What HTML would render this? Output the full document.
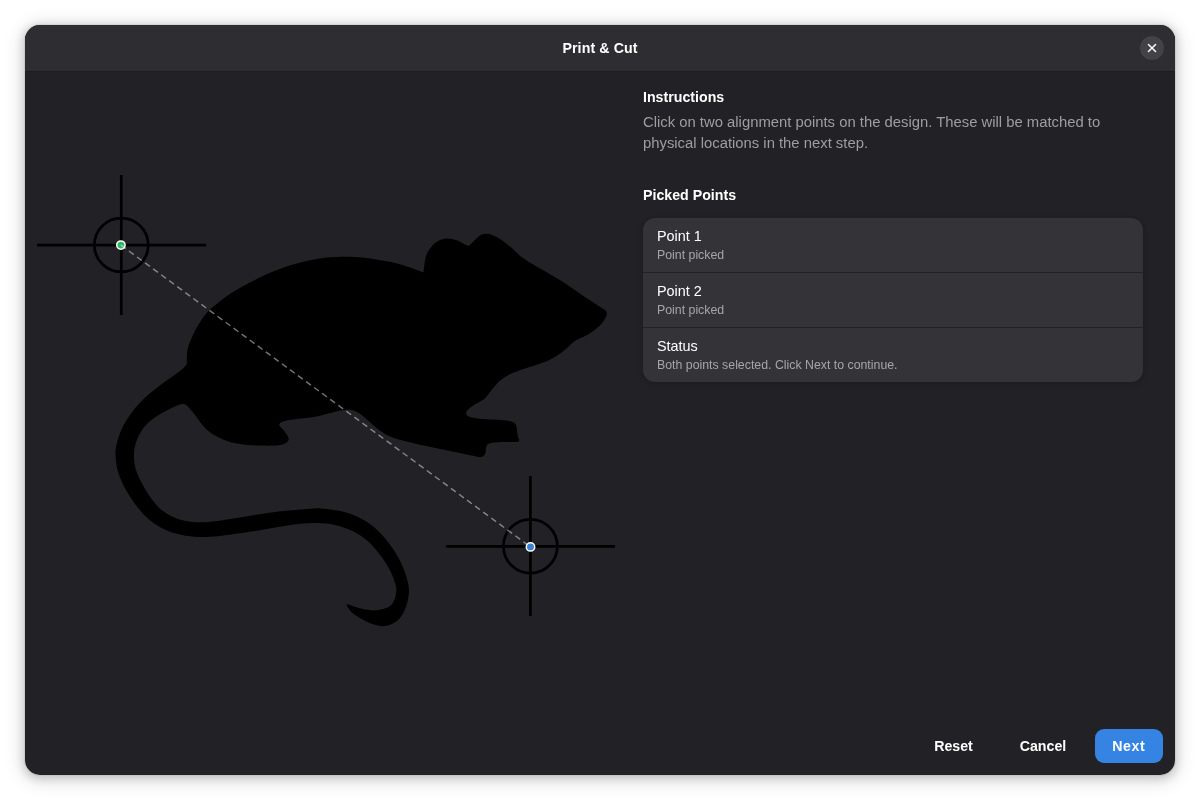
<!DOCTYPE html>
<html lang="en">
<head>
<meta charset="utf-8">
<title>Print &amp; Cut</title>
<style>
*{box-sizing:border-box;margin:0;padding:0}
html,body{width:1200px;height:800px;overflow:hidden;background:#fff}
body{font-family:"Liberation Sans","DejaVu Sans",sans-serif;color:#fff;position:relative;-webkit-font-smoothing:antialiased}
.win{will-change:transform;position:absolute;left:25px;top:25px;width:1150px;height:750px;border-radius:15px;background:#222226;overflow:hidden}
.shadow{position:absolute;left:25px;top:25px;width:1150px;height:750px;border-radius:15px;
 box-shadow:0 2px 8px 2px rgba(0,0,0,.16),0 3px 18px 5px rgba(0,0,0,.10),0 0 0 1px rgba(0,0,0,.05)}
.hdr{position:absolute;left:0;top:0;width:1150px;height:46px;background:#2e2e32;box-shadow:0 1px 0 #1d1d20}
.title{position:absolute;left:0;width:1150px;top:14px;text-align:center;font-weight:700;font-size:14.2px;line-height:18px;letter-spacing:.1px}
.close{position:absolute;left:1115px;top:11px;width:24px;height:24px;border-radius:12px;background:#434347}
.close svg{position:absolute;left:0;top:0}
.art{position:absolute;left:0;top:0;width:1200px;height:800px}
.h{position:absolute;left:618px;font-weight:700;font-size:14.2px;line-height:18px;white-space:nowrap}
.p{position:absolute;left:618px;font-size:14.83px;line-height:21px;color:#9e9ea0;white-space:nowrap}
.list{position:absolute;left:618px;top:193px;width:500px;height:164px;border-radius:12px;background:#343338;overflow:hidden;box-shadow:0 0 0 1px rgba(0,0,0,.03),0 1px 3px 1px rgba(0,0,0,.07),0 2px 6px 2px rgba(0,0,0,.03)}
.row{position:absolute;left:0;width:500px;height:54px}
.row+.row{border-top:1px solid #222225}
.rt{position:absolute;left:14px;top:9px;font-size:14.4px;line-height:18px;white-space:nowrap}
.rs{position:absolute;left:14px;top:30px;font-size:12.33px;line-height:15px;color:#a6a6a8;white-space:nowrap}
.btn{position:absolute;top:704px;height:34px;border-radius:9px;font-weight:700;font-size:14.2px;line-height:34px;text-align:center;white-space:nowrap}
.next{background:#3584e4}
</style>
</head>
<body>
<div class="shadow"></div>
<div class="win">
  <div class="hdr">
    <div class="title">Print &amp; Cut</div>
    <div class="close"><svg width="24" height="24" viewBox="0 0 24 24"><g stroke="#fff" stroke-width="1.45" stroke-linecap="round"><line x1="8.45" y1="8.45" x2="15.55" y2="15.55"/><line x1="15.55" y1="8.45" x2="8.45" y2="15.55"/></g></svg></div>
  </div>

  <div class="h" style="top:63px">Instructions</div>
  <div class="p" style="top:87px">Click on two alignment points on the design. These will be matched to<br>physical locations in the next step.</div>
  <div class="h" style="top:161px">Picked Points</div>

  <div class="list">
    <div class="row" style="top:0"><div class="rt">Point 1</div><div class="rs">Point picked</div></div>
    <div class="row" style="top:54px;height:56px"><div class="rt" style="top:9px">Point 2</div><div class="rs">Point picked</div></div>
    <div class="row" style="top:109px;height:55px"><div class="rt" style="top:9px">Status</div><div class="rs">Both points selected. Click Next to continue.</div></div>
  </div>

  <div class="btn" style="left:897.5px;width:62px">Reset</div>
  <div class="btn" style="left:983px;width:70px">Cancel</div>
  <div class="btn next" style="left:1070px;width:68px;letter-spacing:.5px;text-indent:-.5px">Next</div>
</div>

<svg class="art" width="1200" height="800" viewBox="0 0 1200 800">
  <path fill="#000" d="M423.5 272.4C423.8 270.1 424.6 262.1 425.4 258.6C426.2 255.1 426.9 253.5 428.2 251.2C429.5 248.9 431.2 246.8 433.0 245.0C434.8 243.2 436.7 241.7 439.0 240.6C441.3 239.5 443.9 238.5 447.0 238.5C450.1 238.5 454.5 239.4 457.5 240.4C460.5 241.4 463.3 243.7 465.0 244.6C466.7 245.5 466.7 245.6 467.6 245.6C468.5 245.6 468.5 246.0 470.4 244.4C472.3 242.8 476.3 238.0 479.0 236.2C481.7 234.4 483.3 233.6 486.4 233.8C489.5 234.0 493.4 235.3 497.4 237.5C501.4 239.7 506.3 243.5 510.3 246.7C514.3 249.9 517.6 253.9 521.3 256.8C525.0 259.7 528.1 261.5 532.4 264.1C536.7 266.7 541.5 269.2 547.0 272.4C552.5 275.6 559.3 279.4 565.4 283.4C571.5 287.4 578.1 292.5 583.8 296.3C589.5 300.1 595.9 304.1 599.4 306.4C602.9 308.7 603.8 308.6 605.0 310.0C606.2 311.4 607.3 312.6 606.8 314.7C606.3 316.8 604.5 320.1 602.2 322.9C599.9 325.6 596.4 328.8 593.0 331.2C589.6 333.6 585.1 335.9 582.0 337.6C578.9 339.3 577.4 339.3 574.6 341.3C571.8 343.3 568.8 346.7 565.4 349.4C562.0 352.1 558.1 355.1 554.0 357.5C549.9 359.9 545.3 361.7 540.5 363.5C535.7 365.3 530.0 366.8 525.0 368.5C520.0 370.2 514.4 372.0 510.3 374.0C506.2 376.0 503.3 377.8 500.2 380.4C497.1 383.0 494.5 386.5 491.9 389.6C489.3 392.7 487.7 396.2 484.6 398.8C481.5 401.4 476.4 403.3 473.5 405.3C470.6 407.3 468.3 409.3 467.1 410.8C465.9 412.3 465.9 413.3 466.5 414.4C467.1 415.5 468.1 416.4 470.8 417.2C473.5 418.0 477.6 418.5 482.7 419.0C487.8 419.5 496.2 419.5 501.1 420.0C506.0 420.5 509.6 420.9 512.1 421.8C514.6 422.7 515.3 423.5 516.2 425.5C517.1 427.5 516.9 431.6 517.3 433.8C517.7 436.0 518.3 437.5 518.6 438.6C518.9 439.7 519.5 440.1 519.3 440.6C519.1 441.2 518.5 441.6 517.6 441.9C516.7 442.1 516.5 442.1 514.0 442.1C511.6 442.1 506.9 441.8 502.9 442.0C498.9 442.2 492.8 442.5 490.0 443.3C487.2 444.1 487.1 445.0 486.4 446.6C485.6 448.2 486.1 451.4 485.5 453.0C484.9 454.6 484.1 455.8 482.7 456.4C481.3 457.0 481.8 457.4 477.2 456.7C472.6 456.0 463.4 453.8 455.1 452.1C446.8 450.4 436.2 448.2 427.6 446.3C419.0 444.4 409.9 442.4 403.4 440.7C396.9 439.0 393.0 438.1 388.7 436.1C384.4 434.1 381.6 431.8 377.6 428.7C373.6 425.6 368.5 420.6 364.8 417.7C361.1 414.8 358.7 412.6 355.6 411.3C352.5 410.0 350.1 409.7 346.4 409.8C342.7 409.9 338.7 411.0 333.5 412.2C328.3 413.4 321.2 415.7 315.1 416.8C309.0 417.9 302.2 418.2 296.8 419.0C291.4 419.8 285.9 420.4 283.0 421.4C280.1 422.4 279.2 423.5 279.3 425.0C279.4 426.5 282.4 428.5 283.9 430.6C285.4 432.8 288.0 435.9 288.5 437.9C289.0 439.9 288.4 441.3 286.7 442.5C285.0 443.7 282.8 444.8 278.4 445.3C273.9 445.8 266.4 445.7 260.0 445.5C253.6 445.3 245.5 444.8 239.7 443.9C233.9 443.0 229.6 441.9 225.0 440.2C220.4 438.5 215.8 436.2 212.1 433.8C208.4 431.4 205.9 428.9 202.9 425.5C199.9 422.1 196.6 416.9 193.8 413.5C191.1 410.1 188.6 406.8 186.4 405.3C184.2 403.8 183.7 403.7 180.9 404.3C178.2 404.9 174.2 406.8 169.9 408.9C165.6 411.0 159.6 414.0 155.1 417.2C150.6 420.4 146.4 423.9 143.2 428.2C140.0 432.5 137.3 438.3 135.8 442.9C134.3 447.5 134.0 451.6 134.0 456.0C134.0 460.4 134.4 464.7 135.8 469.4C137.2 474.1 139.7 479.2 142.3 484.1C144.9 489.0 148.1 494.4 151.5 498.8C154.9 503.2 158.2 507.5 162.5 510.8C166.8 514.1 171.7 516.8 177.2 518.7C182.7 520.6 188.9 521.8 195.6 522.2C202.3 522.6 210.2 521.7 217.6 520.9C224.9 520.1 232.3 518.8 239.7 517.6C247.1 516.4 254.5 515.0 261.8 513.9C269.2 512.8 277.1 511.8 283.8 511.1C290.5 510.4 296.1 509.9 302.2 509.5C308.3 509.1 314.0 508.1 320.4 508.4C326.8 508.7 334.3 509.6 340.7 511.1C347.1 512.6 353.2 514.7 359.0 517.6C364.8 520.5 370.4 524.0 375.6 528.6C380.8 533.2 386.0 539.3 390.3 545.1C394.6 550.9 398.4 557.4 401.3 563.5C404.2 569.6 406.6 576.7 407.8 581.9C409.0 587.1 409.2 590.2 408.7 594.8C408.2 599.4 406.9 605.2 405.0 609.5C403.1 613.8 400.7 617.8 397.6 620.5C394.5 623.2 390.3 624.9 386.6 625.7C382.9 626.5 379.6 626.1 375.6 625.1C371.6 624.1 366.7 621.8 362.7 619.6C358.7 617.5 354.4 614.7 351.7 612.2C348.9 609.7 347.1 605.8 346.2 604.5C346.8 604.6 347.4 604.2 349.9 604.9C352.3 605.6 356.9 607.7 360.9 608.6C364.9 609.5 369.8 610.4 373.8 610.4C377.8 610.4 381.8 609.7 384.8 608.6C387.9 607.5 390.3 606.3 392.1 604.0C393.9 601.7 395.2 597.9 395.8 594.8C396.4 591.7 396.7 589.6 395.8 585.6C394.9 581.6 392.8 575.8 390.3 570.9C387.9 566.0 384.8 561.1 381.1 556.2C377.4 551.3 372.8 545.6 368.2 541.5C363.6 537.4 359.0 534.2 353.5 531.4C348.0 528.6 341.2 526.3 335.1 524.9C329.0 523.5 322.9 523.2 316.8 523.1C310.7 523.0 304.5 523.4 298.4 524.0C292.3 524.6 285.5 525.9 280.0 526.8C274.5 527.7 271.5 528.2 265.4 529.2C259.3 530.2 251.1 531.7 243.4 532.8C235.8 533.9 226.8 535.3 219.5 536.0C212.2 536.7 205.7 537.2 199.3 537.0C192.9 536.8 186.7 536.0 180.9 534.7C175.1 533.4 169.5 531.7 164.3 529.2C159.1 526.8 154.2 523.8 149.6 520.0C145.0 516.2 140.8 511.3 136.8 506.2C132.8 501.1 128.8 495.1 125.7 489.6C122.6 484.1 120.1 478.5 118.4 473.1C116.7 467.7 115.9 461.7 115.6 457.0C115.3 452.3 115.4 449.6 116.5 444.8C117.6 440.0 119.3 433.9 122.1 428.2C124.9 422.5 128.8 416.3 133.1 410.8C137.4 405.3 142.6 399.9 147.8 395.1C153.0 390.4 158.8 386.4 164.3 382.3C169.8 378.2 177.2 373.4 180.9 370.3C184.7 367.2 185.8 365.0 186.8 363.9C186.9 361.8 186.6 355.1 187.3 351.0C188.0 346.9 189.2 343.9 191.0 339.5C192.8 335.1 195.6 329.4 198.4 324.8C201.2 320.2 203.9 315.9 207.6 311.9C211.3 307.9 215.8 304.4 220.4 300.9C225.0 297.4 229.6 294.2 235.1 290.8C240.6 287.4 246.8 284.1 253.5 280.7C260.2 277.3 268.2 273.5 275.6 270.6C283.0 267.7 290.2 265.2 297.6 263.2C305.0 261.2 312.3 259.7 319.7 258.6C327.1 257.5 334.4 257.0 341.8 256.8C349.2 256.6 357.1 257.1 363.8 257.7C370.5 258.3 376.2 259.3 382.2 260.4C388.2 261.5 393.1 262.3 400.0 264.3C406.9 266.3 419.6 271.0 423.5 272.4Z"/>
  <g stroke="#000" stroke-width="2.75" fill="none">
    <path d="M37 245H206M121.3 175V315"/>
    <circle cx="121.3" cy="245" r="26.95"/>
    <path d="M446 546.4H615M530.4 476V616"/>
    <circle cx="530.4" cy="546.2" r="26.95"/>
  </g>
  <circle cx="120.9" cy="245.1" r="4.2" fill="#2db865" stroke="#fff" stroke-width="1.5"/>
  <circle cx="530.5" cy="546.9" r="4.2" fill="#3a82cf" stroke="#fff" stroke-width="1.5"/>
  <path d="M120.9 245.1L527.6 544.8" stroke="#fff" stroke-opacity=".45" stroke-width="1.45" stroke-dasharray="6 4" fill="none"/>
</svg>
</body>
</html>
